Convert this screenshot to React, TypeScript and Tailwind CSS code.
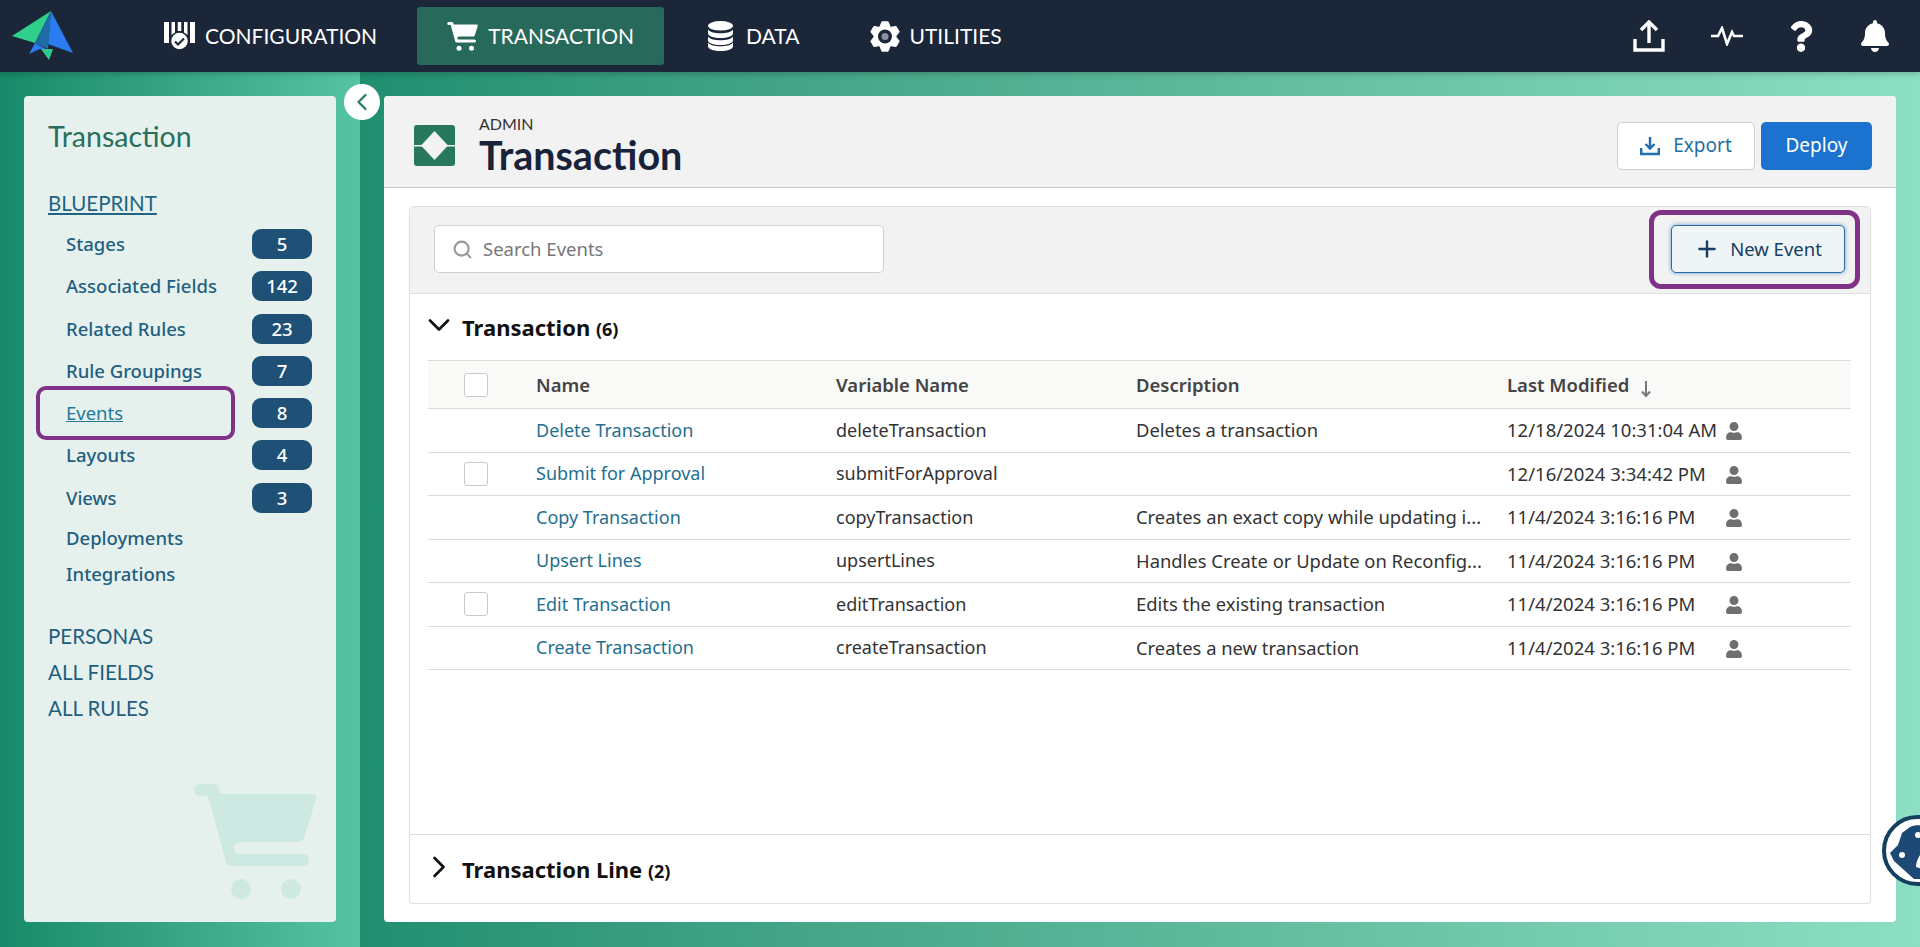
import React from 'react';
import { FaBell, FaQuestion, FaUser } from 'react-icons/fa';
import { ChevronDown, ChevronLeft, ChevronRight, Plus, Search } from 'lucide-react';

const CART_PATH =
  'M6 0H18Q24 0 25 6L26 10H118Q123 10 122 15L110 54Q109 58 105 58H48Q40 58 40 64Q40 70 48 70H108Q115 70 115 76Q115 82 108 82H38Q33 82 32 78L14 12H6Q0 12 0 6Q0 0 6 0Z';

function CartIcon({ className }: { className?: string }) {
  return (
    <svg viewBox="0 0 122 116" className={className} fill="currentColor">
      <path d={CART_PATH} />
      <circle cx="47" cy="105" r="10" />
      <circle cx="97" cy="105" r="10" />
    </svg>
  );
}

function Logo() {
  return (
    <svg viewBox="0 0 66 50" className="h-[50px] w-[66px]">
      <polygon points="19,43 25,32 36,38 30,38" fill="#2e7bf0" />
      <polygon points="31,38 43,38 39,49" fill="#2fc98b" />
      <polygon points="2,25 41,0 25,32" fill="#2fd08c" />
      <polygon points="41,0 63,42 38,33" fill="#2a7cf0" />
      <polygon points="41,0 25,32 38,38" fill="#1f6da6" />
    </svg>
  );
}

function ConfigIcon() {
  return (
    <svg viewBox="0 0 31 28" className="h-7 w-[31px]" fill="white">
      <rect x="0" y="0" width="5" height="21" />
      <rect x="26" y="0" width="5" height="21" />
      <rect x="7.500" y="0" width="3.500" height="13" />
      <rect x="13.750" y="0" width="3.500" height="9" />
      <rect x="20" y="0" width="3.500" height="13" />
      <circle cx="15.500" cy="19" r="9" stroke="#1b2639" strokeWidth="1.500" />
      <path d="M11 19.500l3 3 6-6" fill="none" stroke="#1b2639" strokeWidth="2.200" />
    </svg>
  );
}

function DataIcon() {
  return (
    <svg viewBox="0 0 25 30" className="h-[30px] w-[25px]" fill="white">
      <ellipse cx="12.500" cy="4.800" rx="12.500" ry="4.800" />
      <path d="M0 8.500c2 2.700 7 3.800 12.500 3.800S23 11.200 25 8.500v3.700c0 2.800-5.500 4.800-12.500 4.800S0 15 0 12.200z" />
      <path d="M0 15.500c2 2.700 7 3.800 12.500 3.800S23 18.200 25 15.500v3.700c0 2.800-5.500 4.800-12.500 4.800S0 22 0 19.200z" />
      <path d="M0 21.500c2 2.700 7 3.800 12.500 3.800S23 24.200 25 21.500v3.700c0 2.800-5.500 4.800-12.500 4.800S0 28 0 25.200z" />
    </svg>
  );
}

function GearIcon() {
  // six teeth, one pointing straight up
  const points: string[] = [];
  for (let i = 0; i < 6; i++) {
    const a = -90 + i * 60;
    [[-27, 11], [-12, 15], [12, 15], [27, 11]].forEach(([da, r]) => {
      const rad = ((a + da) * Math.PI) / 180;
      points.push(`${(15 + r * Math.cos(rad)).toFixed(2)},${(15.5 + r * Math.sin(rad)).toFixed(2)}`);
    });
  }
  return (
    <svg viewBox="0 0 30 31" className="h-[31px] w-[30px]">
      <polygon points={points.join(' ')} fill="white" stroke="white" strokeWidth="1" strokeLinejoin="round" />
      <circle cx="15" cy="15.500" r="7" fill="#1b2639" />
      <circle cx="15" cy="15.500" r="3.500" fill="#8b93a0" />
    </svg>
  );
}

function NavItem({ icon, label, active, gap }: { icon: React.ReactNode; label: string; active?: boolean; gap: string }) {
  return (
    <div className={`flex h-[58px] items-center rounded-[3px] px-[30px] ${gap} ${active ? 'bg-[#27695a]' : ''}`}>
      {icon}
      <span className="font-['Lato',sans-serif] text-[21px] text-white">{label}</span>
    </div>
  );
}

const blueprint = [
  { label: 'Stages', count: '5' },
  { label: 'Associated Fields', count: '142' },
  { label: 'Related Rules', count: '23' },
  { label: 'Rule Groupings', count: '7' },
  { label: 'Events', count: '8', current: true },
  { label: 'Layouts', count: '4' },
  { label: 'Views', count: '3' },
];

function Sidebar() {
  return (
    <aside className="relative h-[826px] w-[312px] rounded-[4px] bg-[#e6f1ee] pl-6 pr-6 pt-[23px]">
      <h2 className="font-['Lato',sans-serif] text-[28.5px] leading-[34px] text-[#2a6f5e]">Transaction</h2>
      <a className="mt-[38px] block font-['Lato',sans-serif] text-[20.5px] leading-6 text-[#1f6484] underline">BLUEPRINT</a>
      <ul className="mt-[14px] flex flex-col gap-[12.25px]">
        {blueprint.map((item) => (
          <li key={item.label} className="relative flex h-[30px] items-center justify-between pl-[18px]">
            <span className={`text-[18.5px] ${item.current ? 'text-[#23789a] underline' : 'font-medium text-[#1f5f80]'}`}>
              {item.label}
            </span>
            <span className="flex h-[30px] w-[60px] items-center justify-center rounded-[9px] bg-[#1f5177] text-[18.5px] font-medium text-white">
              {item.count}
            </span>
            {item.current && (
              <span className="absolute left-[-12px] top-[-12px] h-[54px] w-[199px] rounded-[10px] border-4 border-[#7f3287]" />
            )}
          </li>
        ))}
      </ul>
      <div className="mt-[13px] flex flex-col gap-[12px] pl-[18px] text-[18.5px] font-medium leading-6 text-[#1f5f80]">
        <span>Deployments</span>
        <span>Integrations</span>
      </div>
      <div className="mt-[38px] flex flex-col gap-[12px] font-['Lato',sans-serif] text-[20.5px] leading-6 text-[#1f5f80]">
        <span>PERSONAS</span>
        <span>ALL FIELDS</span>
        <span>ALL RULES</span>
      </div>
      <CartIcon className="absolute bottom-[22px] right-[20px] h-[116px] w-[122px] text-[#cde9e2]" />
    </aside>
  );
}

const rows = [
  { name: 'Delete Transaction', variable: 'deleteTransaction', desc: 'Deletes a transaction', date: '12/18/2024 10:31:04 AM', check: false },
  { name: 'Submit for Approval', variable: 'submitForApproval', desc: '', date: '12/16/2024 3:34:42 PM', check: true },
  { name: 'Copy Transaction', variable: 'copyTransaction', desc: 'Creates an exact copy while updating i...', date: '11/4/2024 3:16:16 PM', check: false },
  { name: 'Upsert Lines', variable: 'upsertLines', desc: 'Handles Create or Update on Reconfig...', date: '11/4/2024 3:16:16 PM', check: false },
  { name: 'Edit Transaction', variable: 'editTransaction', desc: 'Edits the existing transaction', date: '11/4/2024 3:16:16 PM', check: true },
  { name: 'Create Transaction', variable: 'createTransaction', desc: 'Creates a new transaction', date: '11/4/2024 3:16:16 PM', check: false },
];

const checkbox = 'h-6 w-6 rounded-[3px] border border-[#c9c9c9] bg-white';

function EventsTable() {
  return (
    <div className="ml-[18px] mr-[19px] text-[18.5px]">
      <div className="flex h-[49px] items-center border-y border-[#dddbd8] bg-[#f9f9f8] font-semibold text-[#444]">
        <div className="w-[108px] pl-[36px]">
          <div className={checkbox} />
        </div>
        <div className="w-[300px]">Name</div>
        <div className="w-[300px]">Variable Name</div>
        <div className="w-[371px]">Description</div>
        <div className="flex items-center gap-[11px]">
          Last Modified
          <svg viewBox="0 0 12 18" className="mt-[8px] h-[18px] w-3" fill="none" stroke="#777" strokeWidth="2">
            <path d="M6 1v15M2 11.5L6 16l4-4.5" />
          </svg>
        </div>
      </div>
      {rows.map((row) => (
        <div key={row.name} className="flex h-[43.5px] items-center border-b border-[#dddbd8] text-[#333]">
          <div className="w-[108px] pl-[36px]">{row.check && <div className={checkbox} />}</div>
          <div className="w-[300px] text-[18px] text-[#1f6f8f]">{row.name}</div>
          <div className="w-[300px] text-[18px]">{row.variable}</div>
          <div className="w-[371px] whitespace-nowrap text-[18.4px]">{row.desc}</div>
          <div className="w-[218px] whitespace-nowrap">{row.date}</div>
          <FaUser className="mt-[2px] h-[18px] w-[18px] text-[#6f6f6f]" />
        </div>
      ))}
    </div>
  );
}

function Main() {
  return (
    <main className="flex h-[826px] w-[1512px] flex-col rounded-[4px] bg-white font-['Noto_Sans',sans-serif]">
      <header className="flex h-[92px] shrink-0 items-center justify-between rounded-t-[4px] border-b border-[#c9c9c9] bg-[#f2f2f2] pl-[30px] pr-6 pt-[8px]">
        <div className="flex items-center gap-6">
          <svg viewBox="0 0 41 41" className="h-[41px] w-[41px]">
            <rect width="41" height="41" rx="3" fill="#27785f" />
            <polygon points="20.5,6 34,20.5 20.5,35 7,20.5" fill="#f2f2f2" />
            <rect y="20" width="41" height="1.5" fill="#f2f2f2" />
          </svg>
          <div className="font-['Lato',sans-serif]">
            <div className="text-[16px] leading-[18px] text-[#333]">ADMIN</div>
            <h1 className="text-[39.5px] font-bold leading-[44px] text-[#18233a]">Transaction</h1>
          </div>
        </div>
        <div className="flex gap-[6px] text-[19px]">
          <button className="flex h-12 w-[138px] items-center justify-center gap-[13px] rounded-[5px] border border-[#cfcfcf] bg-white text-[#1f6f9f]">
            <svg viewBox="0 0 20 20" className="h-5 w-5" fill="none" stroke="#1f6fb0" strokeWidth="2.4">
              <path d="M10 1v11M5.5 8l4.5 4.5L14.500 8M1.200 12v6h17.600v-6" />
            </svg>
            Export
          </button>
          <button className="h-12 w-[111px] rounded-[5px] bg-[#1b73cf] text-white">Deploy</button>
        </div>
      </header>
      <div className="mx-[25px] mb-[18px] mt-[18px] flex flex-1 flex-col rounded-[4px] border border-[#dedede]">
        <div className="flex h-[87px] shrink-0 items-center justify-between border-b border-[#dedede] bg-[#f2f2f2] pb-[2px] pl-6 pr-[25px]">
          <div className="flex h-12 w-[450px] items-center gap-[10px] rounded-[5px] border border-[#cfcfcf] bg-white pl-[17px] text-[18.5px] text-[#777]">
            <Search className="h-[21px] w-[21px] text-[#999]" strokeWidth={2.4} />
            Search Events
          </div>
          <div className="relative">
            <button className="flex h-12 w-[174px] items-center justify-center gap-[10px] rounded-[5px] border border-[#2a6a9f] bg-[#eff4f7] text-[18.5px] text-[#173f63] shadow-[0_0_4px_#5c9fd4]">
              <Plus className="h-[26px] w-[26px]" strokeWidth={2.2} />
              New Event
            </button>
            <span className="absolute left-[-22px] top-[-15px] h-[79px] w-[211px] rounded-[12px] border-[5px] border-[#7f3287]" />
          </div>
        </div>
        <div className="flex-1">
          <div className="flex h-[66px] items-center gap-[5px] pl-[11px]">
            <ChevronDown className="h-9 w-9 -translate-y-[2px] text-[#111]" strokeWidth={1.8} />
            <h3 className="text-[22px] font-bold text-[#111]">
              Transaction <span className="text-[18px]">(6)</span>
            </h3>
          </div>
          <EventsTable />
        </div>
        <div className="flex h-[69px] shrink-0 items-center gap-[5px] border-t border-[#dedede] pl-[11px]">
          <ChevronRight className="h-9 w-9 -translate-y-[2px] text-[#111]" strokeWidth={1.8} />
          <h3 className="text-[22px] font-bold text-[#111]">
            Transaction Line <span className="text-[18px]">(2)</span>
          </h3>
        </div>
      </div>
    </main>
  );
}

export default function App() {
  return (
    <div className="relative flex h-[947px] w-[1920px] flex-col overflow-hidden font-['Noto_Sans',sans-serif]">
      <nav className="relative z-10 flex h-[72px] shrink-0 items-center bg-[#1b2639] pl-[10px] pr-[29px] shadow-[0_2px_6px_rgba(0,0,0,0.2)]">
        <Logo />
        <div className="ml-[58px] flex items-center">
          <NavItem gap="gap-[10px]" icon={<ConfigIcon />} label="CONFIGURATION" />
          <div className="w-[10px]" />
          <NavItem gap="gap-[10px]" active icon={<CartIcon className="h-[29px] w-[31px] text-white" />} label="TRANSACTION" />
          <div className="w-[14px]" />
          <NavItem gap="gap-[13px]" icon={<DataIcon />} label="DATA" />
          <div className="w-[10px]" />
          <NavItem gap="gap-[10px]" icon={<GearIcon />} label="UTILITIES" />
        </div>
        <div className="ml-auto flex items-center gap-[46px] text-white">
          <svg viewBox="0 0 32 32" className="h-8 w-8" fill="none" stroke="white" strokeWidth="3.400">
            <path d="M16 23V3M8 10l8-8 8 8M2 19v11h28V19" />
          </svg>
          <svg viewBox="0 0 32 20" className="h-5 w-8" fill="none" stroke="white" strokeWidth="2.600">
            <path d="M0 10h7l4-8 5 16 5-12 2 4h9" />
          </svg>
          <FaQuestion className="h-[31px] w-[24px]" />
          <FaBell className="h-8 w-8" />
        </div>
      </nav>
      <div className="flex flex-1">
        <div className="relative w-[360px] shrink-0 bg-gradient-to-r from-[#168a69] to-[#55c4a2] pl-6 pt-6">
          <Sidebar />
          <button className="absolute left-[344px] top-[12px] flex h-9 w-9 items-center justify-center rounded-full bg-white">
            <ChevronLeft className="h-7 w-7 text-[#2a7d68]" strokeWidth={2} />
          </button>
        </div>
        <div className="flex-1 bg-gradient-to-r from-[#1f8f70] to-[#8cdfc3] pl-6 pt-6">
          <Main />
        </div>
      </div>
      <div className="absolute left-[1882px] top-[815px] flex h-[71px] w-[71px] items-center justify-center rounded-full border-[4px] border-[#14405f] bg-white">
        <svg viewBox="0 0 60 60" className="h-[60px] w-[60px]">
          <path d="M14 12l8-6c6-3 14-2 22 2l12 10v34l-14 6H26L6 40 2 32l8-8z" fill="#1c4a75" />
          <circle cx="30" cy="14" r="3" fill="white" />
          <circle cx="14" cy="34" r="3" fill="white" />
          <path d="M28 46c0-8 6-16 10-18v8l-4 12z" fill="white" />
        </svg>
      </div>
    </div>
  );
}
